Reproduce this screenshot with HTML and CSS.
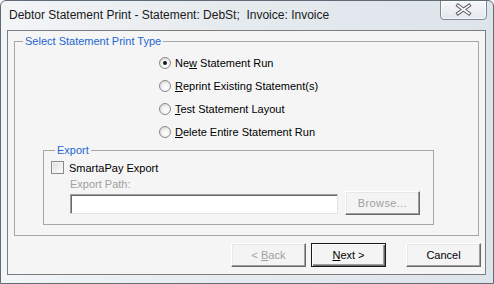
FILE: index.html
```html
<!DOCTYPE html>
<html>
<head>
<meta charset="utf-8">
<link rel="stylesheet" href="styles.css">
</head>
<body>
<div class="window">
  <div class="titlebar">
    <span class="title">Debtor Statement Print - Statement: DebSt;&nbsp; Invoice: Invoice</span>
    <div class="close">
      <svg width="45" height="17" viewBox="0 0 45 17">
        <path d="M17 4.5 L28 12.5 M28 4.5 L17 12.5" stroke="#5b5f66" stroke-width="3.6" stroke-linecap="square" fill="none"/>
        <path d="M17 4.5 L28 12.5 M28 4.5 L17 12.5" stroke="#ffffff" stroke-width="1.6" stroke-linecap="square" fill="none"/>
      </svg>
    </div>
  </div>
  <div class="client">
    <fieldset class="group main">
      <legend>Select Statement Print Type</legend>
      <div class="radios">
        <div class="radio-row"><span class="radio checked"></span><span>Ne<u>w</u> Statement Run</span></div>
        <div class="radio-row"><span class="radio"></span><span><u>R</u>eprint Existing Statement(s)</span></div>
        <div class="radio-row"><span class="radio"></span><span><u>T</u>est Statement Layout</span></div>
        <div class="radio-row"><span class="radio"></span><span><u>D</u>elete Entire Statement Run</span></div>
      </div>
      <fieldset class="group export">
        <legend>Export</legend>
        <div class="check-row"><span class="checkbox"></span><span>SmartaPay Export</span></div>
        <div class="path-label">Export Path:</div>
        <div class="path-row">
          <div class="textbox"></div>
          <div class="btn disabled browse">Browse...</div>
        </div>
      </fieldset>
    </fieldset>
    <div class="buttons">
      <div class="btn disabled"><span>&lt; <u>B</u>ack</span></div>
      <div class="btn default"><span><u>N</u>ext &gt;</span></div>
      <div class="btn cancel">Cancel</div>
    </div>
  </div>
</div>
</body>
</html>
```

FILE: styles.css
```css
html, body {
  margin: 0;
  padding: 0;
  background: #ffffff;
}

.window {
  box-sizing: border-box;
  width: 494px;
  height: 284px;
  border: 1px solid #5f6b77;
  border-radius: 6px 6px 0 0;
  background: linear-gradient(to right, #f3f5f7 0%, #e6ebef 45%, #dde4ea 100%);
  font-family: "Liberation Sans", Arial, sans-serif;
  font-size: 11px;
  color: #000;
  overflow: hidden;
}

.titlebar {
  height: 29px;
  display: flex;
  align-items: flex-start;
  padding-left: 8px;
}

.title {
  font-size: 12px;
  line-height: 12px;
  margin-top: 8px;
  color: #1a1a1a;
  white-space: nowrap;
}

.close {
  margin-left: auto;
  margin-right: 6px;
  margin-top: -1px;
  width: 45px;
  height: 18px;
  border: 1px solid #7c8894;
  border-radius: 0 0 4px 4px;
  background: linear-gradient(to bottom, #f6f8fa, #e3e8ed);
  box-shadow: inset 0 0 0 1px rgba(255,255,255,0.7);
}

.close svg {
  display: block;
}

.client {
  box-sizing: border-box;
  height: 245px;
  margin: 0 7px 0 6px;
  border: 1px solid #7d7d7d;
  background: #f5f5f5;
  display: flex;
  flex-direction: column;
}

.group {
  border: 1px solid #a7a7a7;
  margin: 0;
  padding: 0;
  min-width: 0;
}

.group legend {
  color: #1e66d2;
  padding: 0 2px;
  line-height: 13px;
  margin-left: 8px;
}

.main {
  margin: 4px 6px 0 6px;
  padding: 3px 0 10px 0;
}

.radios {
  margin-left: 144px;
  display: flex;
  flex-direction: column;
}

.radio-row {
  height: 23px;
  display: flex;
  align-items: center;
  gap: 4px;
}

.radio {
  box-sizing: border-box;
  width: 12px;
  height: 12px;
  border-radius: 50%;
  border: 1px solid #8a8a8a;
  background: radial-gradient(circle at 60% 65%, #ffffff 0%, #f2f2f2 45%, #c8c8c8 100%);
  display: flex;
  align-items: center;
  justify-content: center;
}

.radio.checked::after {
  content: "";
  width: 4px;
  height: 4px;
  border-radius: 50%;
  background: #1a1a1a;
}

.export {
  margin: 1px 44px 0 28px;
  padding: 3px 0 9px 7px;
}

.export legend {
  margin-left: 4px;
}

.check-row {
  height: 15px;
  display: flex;
  align-items: center;
  gap: 5px;
}

.checkbox {
  box-sizing: border-box;
  width: 13px;
  height: 13px;
  border: 1px solid #8a8a8a;
  background: linear-gradient(135deg, #dcdcdc, #ffffff);
  box-shadow: inset 0 0 0 1px #f4f4f4;
}

.path-label {
  margin-top: 3px;
  margin-left: 19px;
  height: 13px;
  line-height: 13px;
  color: #a0a0a0;
}

.path-row {
  margin-left: 19px;
  height: 24px;
  display: flex;
  align-items: flex-start;
  gap: 7px;
}

.textbox {
  box-sizing: border-box;
  margin-top: 3px;
  width: 268px;
  height: 20px;
  background: #ffffff;
  border: 1px solid;
  border-color: #a0a0a0 #e3e3e3 #e3e3e3 #a0a0a0;
  box-shadow: inset 1px 1px #696969;
}

.btn {
  box-sizing: border-box;
  width: 75px;
  height: 24px;
  display: flex;
  align-items: center;
  justify-content: center;
  background: #f4f4f4;
  border: 1px solid;
  border-color: #ffffff #696969 #696969 #ffffff;
  box-shadow: inset -1px -1px #a0a0a0, inset 1px 1px #e8e8e8;
  white-space: pre;
}

.btn.disabled {
  color: #a0a0a0;
}

.browse {
  letter-spacing: 0.4px;
}

.buttons {
  margin-top: 7px;
  display: flex;
  padding-left: 223px;
  gap: 5px;
}

.btn.default {
  border: 1px solid #1a1a1a;
  box-shadow: inset 1px 1px #ffffff, inset -1px -1px #696969, inset -2px -2px #a0a0a0;
}

.btn.cancel {
  margin-left: 15px;
}
```
